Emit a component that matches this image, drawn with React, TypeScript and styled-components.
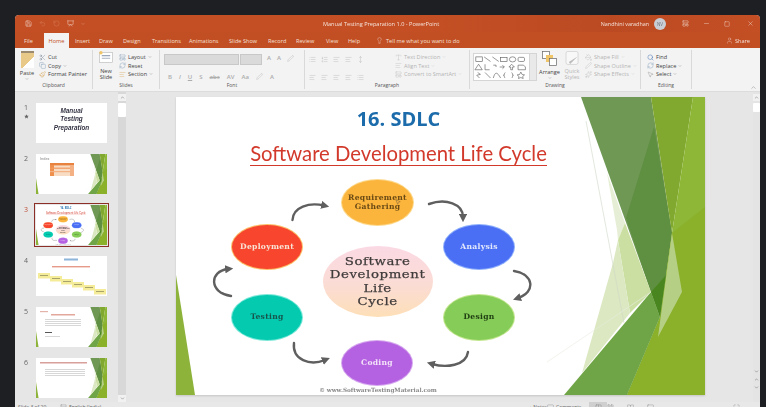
import React from 'react';
import styled, { createGlobalStyle } from 'styled-components';
import {
  Search,
  Lightbulb,
  Save,
  Undo2,
  RotateCcw,
  Presentation,
  Scissors,
  Copy,
  Paintbrush,
  LayoutTemplate,
  RefreshCw,
  Minus,
  X,
  User,
  Square,
  ChevronUp,
  ChevronDown,
  PaintBucket,
  Pen,
  Sparkles,
  MousePointer2,
  Star,
  Type,
  AlignLeft,
  List,
  ListOrdered,
  MoveVertical,
  NotebookText,
  MessageSquare,
  Columns2,
  LayoutGrid,
  BookOpen,
  Monitor,
  Maximize,
} from 'lucide-react';

const SLIDE_W = 529;
const SLIDE_H = 298;
const THUMB_W = 71;

const GlobalStyle = createGlobalStyle`
  html, body {
    margin: 0;
    height: 100%;
    overflow: hidden;
    background: #1d1f23;
  }
`;

const Page = styled.div`
  width: 766px;
  height: 407px;
  box-sizing: border-box;
  padding: 15px 6px 0 15px;
  background: #1d1f23;
  overflow: hidden;
  font-family: 'Open Sans', 'Liberation Sans', sans-serif;
`;

const Window = styled.div`
  height: 401px;
  display: flex;
  flex-direction: column;
  background: #e6e6e6;
  border-radius: 4px 4px 0 0;
  overflow: hidden;
  filter: blur(0.4px);
`;

const TitleBar = styled.div`
  height: 17px;
  flex: none;
  display: flex;
  align-items: center;
  background: linear-gradient(90deg, #c44f25 55%, #bb4a22 80%, #c44f25 100%);
  color: #f5e3da;
  font-size: 5.6px;
`;

const Quick = styled.div`
  width: 155px;
  display: flex;
  align-items: center;
  gap: 7px;
  padding-left: 10px;
  box-sizing: border-box;
`;

const DocName = styled.div`
  width: 290px;
  padding-left: 159px;
  white-space: nowrap;
`;

const TitleRight = styled.div`
  flex: 1;
  display: flex;
  align-items: center;
  justify-content: flex-end;
  gap: 14px;
  padding-right: 6px;
`;

const Account = styled.span`
  white-space: nowrap;
  margin-right: -9px;
  font-size: 5.4px;
`;

const Avatar = styled.span`
  width: 12px;
  height: 12px;
  border-radius: 50%;
  background: #c9ced6;
  color: #6c6f78;
  font-size: 4.5px;
  display: flex;
  align-items: center;
  justify-content: center;
  margin-right: 2px;
`;

const CloseBox = styled.span`
  margin-left: 3px;
  line-height: 0;
`;

const TabBar = styled.div`
  height: 16px;
  flex: none;
  display: flex;
  align-items: flex-end;
  background: #c24e24;
  padding-left: 9px;
  color: #f5e0d6;
  font-size: 5.6px;
`;

const Tab = styled.div<{ $w: number; $active?: boolean }>`
  width: ${({ $w }) => $w}px;
  height: 15px;
  flex: none;
  display: flex;
  align-items: center;
  white-space: nowrap;
  ${({ $active }) =>
    $active &&
    `
    background: #f3f3f3;
    color: #c24e24;
    justify-content: center;
    margin-right: 6px;
  `}
`;

const TellMe = styled.div`
  display: flex;
  align-items: center;
  gap: 3px;
  height: 15px;
  white-space: nowrap;
  font-size: 5.6px;
  margin-left: -1px;
`;

const Share = styled.div`
  margin-left: auto;
  margin-right: 10px;
  height: 15px;
  display: flex;
  align-items: center;
  gap: 2px;
`;

const Ribbon = styled.div`
  height: 44px;
  flex: none;
  display: flex;
  background: #f3f3f3;
  position: relative;
  border-bottom: 1px solid #dcdcdc;
  box-sizing: border-box;
`;

const Group = styled.div<{ $w: number }>`
  width: ${({ $w }) => $w}px;
  flex: none;
  box-sizing: border-box;
  display: flex;
  flex-direction: column;
  margin: 2px 0;
  border-right: 1px solid #d9d9d9;
`;

const GroupBody = styled.div`
  flex: 1;
  display: flex;
  gap: 3px;
  padding: 1px 3px 0;
  min-height: 0;
`;

const GroupLabel = styled.div`
  height: 8px;
  line-height: 8px;
  text-align: center;
  font-size: 5px;
  color: #555;
`;

const BigButton = styled.div<{ $w: number; $off?: boolean }>`
  width: ${({ $w }) => $w}px;
  flex: none;
  display: flex;
  flex-direction: column;
  align-items: center;
  font-size: 5.6px;
  line-height: 6.6px;
  text-align: center;
  white-space: nowrap;
  color: ${({ $off }) => ($off ? '#b4b4b4' : '#444')};
`;

const Spacer = styled.span<{ $h: number }>`
  height: ${({ $h }) => $h}px;
  flex: none;
`;

const PasteIcon = styled.div`
  width: 13px;
  height: 17px;
  margin-bottom: 2px;
  background: linear-gradient(135deg, #e8c988 60%, #fff 60%);
  border-top: 2px solid #9a8a70;
  box-sizing: border-box;
`;

const CmdColumn = styled.div<{ $left?: number }>`
  display: flex;
  flex-direction: column;
  justify-content: space-between;
  padding: 2px 0 3px;
  margin-left: ${({ $left }) => $left ?? 0}px;
`;

const Cmd = styled.div<{ $off?: boolean }>`
  display: flex;
  align-items: center;
  gap: 2px;
  height: 8px;
  white-space: nowrap;
  font-size: 5.6px;
  color: ${({ $off }) => ($off ? '#b4b4b4' : '#444')};
  svg {
    flex: none;
  }
`;

const FontColumn = styled.div`
  display: flex;
  flex-direction: column;
  gap: 7px;
  padding-left: 1px;
`;

const FontTop = styled.div`
  display: flex;
  align-items: center;
  gap: 1px;
`;

const FontBox = styled.div<{ $w: number }>`
  width: ${({ $w }) => $w}px;
  height: 11px;
  margin-top: 3px;
  background: #dadada;
  border: 1px solid #c8c8c8;
  box-sizing: border-box;
`;

const ToolRow = styled.div<{ $gap?: number; $left?: number }>`
  display: flex;
  align-items: center;
  gap: ${({ $gap }) => $gap ?? 7}px;
  margin-left: ${({ $left }) => $left ?? 0}px;
  color: #adadad;
  font-size: 6px;
  font-weight: 600;
  height: 9px;
  white-space: nowrap;
`;

const ParaColumn = styled.div`
  width: 83px;
  flex: none;
  display: flex;
  flex-direction: column;
  gap: 10px;
  padding: 4px 0 0 1px;
`;

const Gallery = styled.div`
  width: 64px;
  height: 28px;
  flex: none;
  margin-top: 2px;
  background: #fff;
  border: 1px solid #d5d5d5;
  box-sizing: border-box;
  display: flex;
`;

const GalleryScroll = styled.div`
  width: 6px;
  margin-left: auto;
  background: #e9e9e9;
  border-left: 1px solid #d5d5d5;
`;

const Collapse = styled.div`
  position: absolute;
  right: 3px;
  bottom: 0;
  color: #999;
  line-height: 0;
`;

const Main = styled.div`
  flex: 1;
  display: flex;
  min-height: 0;
  background: #e6e6e6;
`;

const ThumbPane = styled.div`
  width: 103px;
  flex: none;
  display: flex;
  flex-direction: column;
  gap: 11px;
  padding-top: 11px;
  box-sizing: border-box;
`;

const ThumbRow = styled.div`
  display: flex;
  height: 40px;
  flex: none;
`;

const ThumbMeta = styled.div<{ $active?: boolean }>`
  width: 21px;
  flex: none;
  padding-left: 9px;
  box-sizing: border-box;
  font-size: 7px;
  line-height: 9px;
  color: ${({ $active }) => ($active ? '#c0503a' : '#666')};
`;

const Thumb = styled.div<{ $active?: boolean }>`
  width: ${THUMB_W}px;
  height: 40px;
  flex: none;
  position: relative;
  background: #fff;
  overflow: visible;
  ${({ $active }) =>
    $active &&
    `
    outline: 1.5px solid #8c2f26;
    outline-offset: 1px;
  `}
`;

const ThumbClip = styled.div`
  position: absolute;
  inset: 0;
  overflow: hidden;
`;

const CoverTitle = styled.div`
  position: absolute;
  inset: 4px 0 0 0;
  text-align: center;
  font-family: 'Liberation Sans', sans-serif;
  font-style: italic;
  font-weight: 700;
  font-size: 6.4px;
  line-height: 8.4px;
  color: #333344;
`;

const IndexTitle = styled.div`
  position: absolute;
  left: 4px;
  top: 2px;
  font-size: 3.6px;
  color: #777;
`;

const ScrollTrack = styled.div<{ $w: number; $bg: string }>`
  width: ${({ $w }) => $w}px;
  flex: none;
  display: flex;
  flex-direction: column;
  align-items: center;
  background: ${({ $bg }) => $bg};
  color: #555;
`;

const ScrollBtn = styled.div<{ $bottom?: boolean }>`
  width: 100%;
  height: 7px;
  flex: none;
  display: flex;
  align-items: center;
  justify-content: center;
  background: #f1f1f1;
  margin-top: ${({ $bottom }) => ($bottom ? 'auto' : '2px')};
`;

const ScrollThumb = styled.div<{ $h: number }>`
  width: 100%;
  height: ${({ $h }) => $h}px;
  margin-top: 2px;
  background: #fff;
  border-radius: 1px;
`;

const ScrollNav = styled.div`
  margin-top: auto;
  margin-bottom: 12px;
  display: flex;
  flex-direction: column;
  align-items: center;
  gap: 3px;
`;

const Stage = styled.div`
  flex: 1;
  padding: 5px 0 0 50px;
  min-width: 0;
`;

const SlideFrame = styled.div`
  width: ${SLIDE_W}px;
  height: ${SLIDE_H}px;
  position: relative;
  background: #fff;
  overflow: hidden;
  box-shadow: 0 1px 2px rgba(0, 0, 0, 0.15);
`;

const Backdrop = styled.svg`
  position: absolute;
  inset: 0;
  width: 100%;
  height: 100%;
`;

const Heading = styled.div`
  width: 445px;
  position: relative;
  text-align: center;
`;

const SlideNumber = styled.div`
  padding-top: 8px;
  height: 27px;
  line-height: 27px;
  font-family: 'Open Sans', sans-serif;
  font-weight: 700;
  font-size: 20px;
  color: #1c6cab;
`;

const SlideTitle = styled.div`
  margin-top: 10px;
  display: inline-block;
  font-family: 'Lato', sans-serif;
  font-size: 20.3px;
  line-height: 23px;
  color: #d2392b;
  border-bottom: 1.5px solid #d2392b;
  white-space: nowrap;
`;

const Node = styled.div<{ $x: number; $y: number; $w: number; $h: number; $fill: string; $ring: string; $ink: string }>`
  position: absolute;
  left: ${({ $x }) => $x}px;
  top: ${({ $y }) => $y}px;
  width: ${({ $w }) => $w}px;
  height: ${({ $h }) => $h}px;
  border-radius: 50%;
  box-sizing: border-box;
  display: flex;
  align-items: center;
  justify-content: center;
  text-align: center;
  background: ${({ $fill }) => $fill};
  box-shadow: 0 0 0 1px ${({ $ring }) => $ring};
  color: ${({ $ink }) => $ink};
  font-family: 'DejaVu Serif', 'Liberation Serif', serif;
  font-weight: 700;
  font-size: 7.6px;
  line-height: 8.9px;
  letter-spacing: 0.3px;
`;

const HubNode = styled(Node)`
  background: linear-gradient(180deg, #fbd9e4 0%, #fbdcd4 55%, #fddfb8 100%);
  box-shadow: none;
  font-weight: 400;
  font-size: 11.3px;
  line-height: 13.3px;
  letter-spacing: 0.5px;
  -webkit-text-stroke: 0.25px #3f3b3b;
`;

const HubText = styled.span`
  display: block;
  transform: scaleX(1.18);
`;

const Credit = styled.div`
  position: absolute;
  left: 142px;
  bottom: 1px;
  width: 120px;
  display: flex;
  justify-content: center;
  font-family: 'DejaVu Serif', serif;
  font-weight: 700;
  font-size: 5.7px;
  line-height: 8px;
  color: #8a8a8a;
  white-space: nowrap;
`;

const Cursor = styled.div`
  position: absolute;
  left: 219px;
  top: 102px;
  line-height: 0;
  color: #444;
`;

const ScaledSlide = styled.div`
  position: absolute;
  left: 0;
  top: 0;
  transform-origin: 0 0;
`;

const StatusBar = styled.div`
  height: 14px;
  flex: none;
  display: flex;
  align-items: flex-start;
  padding-left: 3px;
  font-size: 5px;
  color: #666;
  white-space: nowrap;
  background: #e8e8e8;
`;

const StatusItem = styled.div<{ $w: number; $on?: boolean }>`
  width: ${({ $w }) => $w}px;
  flex: none;
  height: 12px;
  padding-top: 2px;
  box-sizing: border-box;
  display: flex;
  gap: 2px;
  background: ${({ $on }) => ($on ? '#cfcfcf' : 'transparent')};
  justify-content: ${({ $on }) => ($on ? 'center' : 'flex-start')};
`;

function Caret() {
  return <ChevronDown size={4} strokeWidth={1.5} />;
}

function Facet() {
  return (
    <Backdrop viewBox={`0 0 ${SLIDE_W} ${SLIDE_H}`} preserveAspectRatio="none">
      <polygon points="0,178 19,298 0,298" fill="#8db33a" />
      <polygon points="405,0 475,0 496,136 484,220 475,195" fill="#6f9855" />
      <polygon points="478,30 496,136 490,178 475,195 450,121" fill="#5f8f40" />
      <polygon points="475,0 517,0 496,136" fill="#82a92f" />
      <polygon points="517,0 529,0 529,298 451,298 484,220 496,136" fill="#8eb738" />
      <polygon points="496,136 529,110 529,298 451,298 484,220" fill="#8bb02a" />
      <polygon points="388,298 475,195 484,220 451,298" fill="#6fa546" />
      <polygon points="431,76 449,126 442,143 441,133" fill="#e6efd6" />
      <polygon points="449,126 475,195 454,216 442,143" fill="#ccdfa3" />
      <polygon points="437,166 442,143 454,216 406,276" fill="#dbe8c1" />
      <polygon points="496,136 506,195 482,240" fill="#b5cf85" />
      <polygon points="475,195 490,178 484,220" fill="#4a861f" />
      <line x1="410" y1="24" x2="448" y2="226" stroke="#cfd6c8" strokeWidth="0.6" />
      <line x1="371" y1="265" x2="475" y2="195" stroke="#e8ecdf" strokeWidth="0.6" />
    </Backdrop>
  );
}

const CycleLinks = styled.svg`
  position: absolute;
  inset: 0;
  width: 100%;
  height: 100%;
`;

function SdlcSlide({ pointer }: { pointer?: boolean }) {
  return (
    <SlideFrame>
      <Facet />
      <Heading>
        <SlideNumber>16. SDLC</SlideNumber>
        <SlideTitle>Software Development Life Cycle</SlideTitle>
      </Heading>
      <CycleLinks viewBox={`0 0 ${SLIDE_W} ${SLIDE_H}`}>
        <defs>
          <marker id="tip" markerWidth="3.4" markerHeight="3.4" refX="1.2" refY="1.7" orient="auto">
            <path d="M0 0 L3.4 1.7 L0 3.4 Z" fill="#5f5f5f" />
          </marker>
        </defs>
        <g fill="none" stroke="#5f5f5f" strokeWidth="2.4" strokeLinecap="round">
          <path d="M116.5 123 C117 110 133 105 148 108.5" markerEnd="url(#tip)" />
          <path d="M253 107 C270 101 287 107 287 120" markerEnd="url(#tip)" />
          <path d="M338 174 C358 177 360 195 342 201" markerEnd="url(#tip)" />
          <path d="M292 255 C290 269 270 271 256 267" markerEnd="url(#tip)" />
          <path d="M118 246 C116 263 134 269 149 263" markerEnd="url(#tip)" />
          <path d="M55 199 C33 196 33 174 52 172" markerEnd="url(#tip)" />
        </g>
      </CycleLinks>
      <Node $x={166} $y={83} $w={71} $h={45} $fill="#fbb53c" $ring="#fdd98d" $ink="#6b4a14">
        Requirement
        <br />
        Gathering
      </Node>
      <Node $x={56} $y={128} $w={70} $h={44} $fill="#f7462d" $ring="#fcc06a" $ink="#f9e3d6">
        Deployment
      </Node>
      <Node $x={268} $y={128} $w={70} $h={44} $fill="#4a6ff5" $ring="#8fb0fb" $ink="#e3e8fb">
        Analysis
      </Node>
      <HubNode $x={147} $y={149} $w={110} $h={71} $fill="" $ring="" $ink="#3f3b3b">
        <HubText>
          Software
          <br />
          Development
          <br />
          Life
          <br />
          Cycle
        </HubText>
      </HubNode>
      <Node $x={56} $y={198} $w={70} $h={45} $fill="#04cbb0" $ring="#7ce8d8" $ink="#17544c">
        Testing
      </Node>
      <Node $x={268} $y={198} $w={70} $h={45} $fill="#86cc58" $ring="#c3e68f" $ink="#1f3d12">
        Design
      </Node>
      <Node $x={166} $y={244} $w={70} $h={44} $fill="#b562e2" $ring="#d6a9ee" $ink="#f3e2f8">
        Coding
      </Node>
      <Credit>© www.SoftwareTestingMaterial.com</Credit>
      {pointer && (
        <Cursor>
          <MousePointer2 size={6} strokeWidth={1.4} />
        </Cursor>
      )}
    </SlideFrame>
  );
}

function IndexTable() {
  return (
    <Backdrop viewBox="0 0 71 40">
      <rect x="14" y="9" width="24" height="13" fill="#f8dcc4" />
      <rect x="14" y="9" width="24" height="2.4" fill="#e8823f" />
      <rect x="14" y="11" width="4" height="11" fill="#ef8f4c" />
      <rect x="14" y="13.6" width="24" height="1.2" fill="#f09a5c" />
      <rect x="14" y="17" width="24" height="1.2" fill="#f4b183" />
      <rect x="34" y="11" width="4" height="11" fill="#f4b183" />
    </Backdrop>
  );
}

function StairThumb() {
  const steps = [
    [2, 17],
    [14, 20],
    [25, 23],
    [36, 26],
    [47, 29],
    [58, 33],
  ];
  return (
    <Backdrop viewBox="0 0 71 40">
      <rect x="28" y="2.5" width="14" height="2" fill="#8db4da" />
      <rect x="16" y="10" width="38" height="1.4" fill="#e59a8a" />
      {steps.map(([x, y]) => (
        <g key={x}>
          <rect x={x} y={y} width="12" height="5.5" fill="#f5ec9a" />
          <rect x={x + 2} y={y + 2} width="8" height="1" fill="#a8a26c" />
        </g>
      ))}
    </Backdrop>
  );
}

function NotesThumb({ red }: { red?: boolean }) {
  return (
    <Backdrop viewBox="0 0 71 40">
      {red ? (
        <rect x="4" y="4" width="47" height="1.5" fill="#d8a09a" />
      ) : (
        <>
          <rect x="4" y="4" width="8" height="1.2" fill="#e3b3aa" />
          <rect x="15" y="7" width="24" height="1.5" fill="#e3a79c" />
        </>
      )}
      {[11, 13, 15, 17].map(y => (
        <rect key={y} x="9" y={y + (red ? 0 : 1)} width={red ? 40 : 36} height="0.8" fill="#cdcdcd" />
      ))}
      {!red && <rect x="9" y="25" width="7" height="1" fill="#555" />}
      {!red && <rect x="9" y="29" width="15" height="0.8" fill="#cdcdcd" />}
    </Backdrop>
  );
}

function ShapeGallery() {
  return (
    <svg width="56" height="26" viewBox="0 0 60 26" fill="none" stroke="#5f5f5f" strokeWidth="0.7">
      <rect x="2" y="2" width="7" height="5" />
      <path d="M11 2 L18 7 M20 2 L27 7" />
      <rect x="29" y="2.5" width="7" height="4.5" />
      <ellipse cx="42" cy="4.7" rx="3.5" ry="2.8" />
      <rect x="48" y="2.5" width="7" height="4.5" rx="1.4" />
      <path d="M5 10 L9 16 H1 Z M12 10 V16 H17 M21 11 H24 V13 M28 13 H33 M31 11 L33 13 L31 15 M41 10 L44 13 H42 V16 H40 V13 H38 Z" />
      <path d="M48 16 V11 H54 L56 13 V16 Z" />
      <path d="M4 19 L7 21 L3 22 L6 25 M12 19 L18 25 M21 25 C23 18 25 18 29 25 M34 19 C32 21 34 22 32 22 C34 22 32 24 34 25 M41 19 C43 21 41 22 43 22 C41 22 43 24 41 25" />
      <path d="M51 18.5 L52.4 21.2 L55 21.6 L53 23.4 L53.6 25.5 L51 24.5 L48.4 25.5 L49 23.4 L47 21.6 L49.6 21.2 Z" />
    </svg>
  );
}

function ArrangeIcon() {
  return (
    <svg width="15" height="15" viewBox="0 0 15 15">
      <rect x="0.5" y="0.5" width="7" height="7" fill="#fff" stroke="#666" strokeWidth="0.7" />
      <rect x="4" y="4" width="7" height="7" fill="#f0c468" />
      <rect x="7.5" y="7.5" width="7" height="7" fill="#fff" stroke="#666" strokeWidth="0.7" />
    </svg>
  );
}

function QuickStylesIcon() {
  return (
    <svg width="15" height="16" viewBox="0 0 15 16">
      <rect x="0.5" y="0.5" width="13" height="14" rx="2" fill="#f8f8f8" stroke="#c8c8c8" strokeWidth="0.7" />
      <path d="M13 6 L5 14 L3.5 12 Z" fill="#bcbcbc" />
    </svg>
  );
}

function NewSlideIcon() {
  return (
    <svg width="16" height="14" viewBox="0 0 16 14">
      <rect x="0.5" y="2" width="15" height="11.5" fill="#fff" stroke="#b5b5b5" strokeWidth="0.7" />
      <rect x="3" y="5" width="10" height="1.2" fill="#7f8fa8" />
      <rect x="3" y="8" width="10" height="1.2" fill="#a9b3c4" />
      <circle cx="2" cy="2" r="2" fill="#f0c468" />
    </svg>
  );
}

const tabs: [string, number][] = [
  ['Insert', 24],
  ['Draw', 24],
  ['Design', 29],
  ['Transitions', 37],
  ['Animations', 40],
  ['Slide Show', 39],
  ['Record', 28],
  ['Review', 30],
  ['View', 22],
  ['Help', 29],
];

const off = { size: 7, strokeWidth: 1.2 };

export default function App() {
  return (
    <>
      <GlobalStyle />
      <Page>
        <Window>
          <TitleBar>
            <Quick>
              <Save size={7} strokeWidth={1.6} />
              <Undo2 size={7} strokeWidth={1.3} color="#dc8a66" />
              <RotateCcw size={7} strokeWidth={1.3} color="#dc8a66" />
              <Presentation size={7} strokeWidth={1.5} />
              <Caret />
            </Quick>
            <DocName>Manual Testing Preparation 1.0 - PowerPoint</DocName>
            <TitleRight>
              <Account>Nandhini varadhan</Account>
              <Avatar>NV</Avatar>
              <LayoutTemplate size={7} strokeWidth={1.6} />
              <Minus size={7} strokeWidth={1.4} />
              <Square size={6} strokeWidth={1.6} />
              <CloseBox>
                <X size={7} strokeWidth={1.4} />
              </CloseBox>
            </TitleRight>
          </TitleBar>
          <TabBar>
            <Tab $w={20}>File</Tab>
            <Tab $w={25} $active>
              Home
            </Tab>
            {tabs.map(([name, w]) => (
              <Tab key={name} $w={w}>
                {name}
              </Tab>
            ))}
            <TellMe>
              <Lightbulb size={7} strokeWidth={1.3} />
              Tell me what you want to do
            </TellMe>
            <Share>
              <User size={7} strokeWidth={1.2} />
              Share
            </Share>
          </TabBar>
          <Ribbon>
            <Group $w={78}>
              <GroupBody>
                <BigButton $w={18}>
                  <PasteIcon />
                  Paste
                  <Caret />
                </BigButton>
                <CmdColumn>
                  <Cmd>
                    <Scissors size={7} strokeWidth={1.1} color="#5d6d88" />
                    Cut
                  </Cmd>
                  <Cmd>
                    <Copy size={7} strokeWidth={1.1} color="#5d80a8" />
                    Copy <Caret />
                  </Cmd>
                  <Cmd>
                    <Paintbrush size={7} strokeWidth={1.3} color="#d49a3c" />
                    Format Painter
                  </Cmd>
                </CmdColumn>
              </GroupBody>
              <GroupLabel>Clipboard</GroupLabel>
            </Group>
            <Group $w={67}>
              <GroupBody>
                <BigButton $w={20}>
                  <NewSlideIcon />
                  <Spacer $h={5} />
                  New
                  <br />
                  Slide
                </BigButton>
                <CmdColumn>
                  <Cmd>
                    <LayoutTemplate size={7} strokeWidth={1.1} color="#5d80a8" />
                    Layout <Caret />
                  </Cmd>
                  <Cmd>
                    <RefreshCw size={7} strokeWidth={1.1} color="#5d80a8" />
                    Reset
                  </Cmd>
                  <Cmd>
                    <AlignLeft size={7} strokeWidth={1.1} color="#d49a3c" />
                    Section <Caret />
                  </Cmd>
                </CmdColumn>
              </GroupBody>
              <GroupLabel>Slides</GroupLabel>
            </Group>
            <Group $w={145}>
              <GroupBody>
                <FontColumn>
                  <FontTop>
                    <FontBox $w={75} />
                    <FontBox $w={22} />
                    <ToolRow $gap={6} $left={4}>
                      <span>A</span>
                      <span>A</span>
                      <Pen {...off} />
                    </ToolRow>
                  </FontTop>
                  <ToolRow $gap={7} $left={4}>
                    <span>B</span>
                    <i>I</i>
                    <u>U</u>
                    <span>S</span>
                    <s>abc</s>
                    <span>AV</span>
                    <span>Aa</span>
                    <Pen {...off} />
                    <span>A</span>
                  </ToolRow>
                </FontColumn>
              </GroupBody>
              <GroupLabel>Font</GroupLabel>
            </Group>
            <Group $w={165}>
              <GroupBody>
                <ParaColumn>
                  <ToolRow $gap={5}>
                    <List {...off} />
                    <ListOrdered {...off} />
                    <AlignLeft {...off} />
                    <AlignLeft {...off} />
                    <MoveVertical {...off} />
                  </ToolRow>
                  <ToolRow $gap={5}>
                    <AlignLeft {...off} />
                    <AlignLeft {...off} />
                    <AlignLeft {...off} />
                    <AlignLeft {...off} />
                    <List {...off} />
                  </ToolRow>
                </ParaColumn>
                <CmdColumn>
                  <Cmd $off>
                    <Type size={7} strokeWidth={1.1} />
                    Text Direction <Caret />
                  </Cmd>
                  <Cmd $off>
                    <AlignLeft size={7} strokeWidth={1.1} />
                    Align Text <Caret />
                  </Cmd>
                  <Cmd $off>
                    <LayoutTemplate size={7} strokeWidth={1.1} />
                    Convert to SmartArt <Caret />
                  </Cmd>
                </CmdColumn>
              </GroupBody>
              <GroupLabel>Paragraph</GroupLabel>
            </Group>
            <Group $w={171}>
              <GroupBody>
                <Gallery>
                  <ShapeGallery />
                  <GalleryScroll />
                </Gallery>
                <BigButton $w={19}>
                  <ArrangeIcon />
                  <Spacer $h={3} />
                  Arrange
                  <Caret />
                </BigButton>
                <BigButton $w={20} $off>
                  <QuickStylesIcon />
                  <Spacer $h={2} />
                  Quick
                  <br />
                  Styles
                </BigButton>
                <CmdColumn>
                  <Cmd $off>
                    <PaintBucket size={7} strokeWidth={1.1} />
                    Shape Fill <Caret />
                  </Cmd>
                  <Cmd $off>
                    <Pen size={7} strokeWidth={1.1} />
                    Shape Outline <Caret />
                  </Cmd>
                  <Cmd $off>
                    <Sparkles size={7} strokeWidth={1.1} />
                    Shape Effects <Caret />
                  </Cmd>
                </CmdColumn>
              </GroupBody>
              <GroupLabel>Drawing</GroupLabel>
            </Group>
            <Group $w={51}>
              <GroupBody>
                <CmdColumn $left={3}>
                  <Cmd>
                    <Search size={7} strokeWidth={1.4} color="#2b5fa8" />
                    Find
                  </Cmd>
                  <Cmd>
                    <RefreshCw size={7} strokeWidth={1.1} color="#5d80a8" />
                    Replace <Caret />
                  </Cmd>
                  <Cmd>
                    <MousePointer2 size={7} strokeWidth={1.1} color="#777" />
                    Select <Caret />
                  </Cmd>
                </CmdColumn>
              </GroupBody>
              <GroupLabel>Editing</GroupLabel>
            </Group>
            <Collapse>
              <ChevronUp size={7} />
            </Collapse>
          </Ribbon>
          <Main>
            <ThumbPane>
              <ThumbRow>
                <ThumbMeta>
                  1
                  <br />
                  <Star size={5} fill="#666" strokeWidth={0} />
                </ThumbMeta>
                <Thumb>
                  <CoverTitle>
                    Manual
                    <br />
                    Testing
                    <br />
                    Preparation
                  </CoverTitle>
                </Thumb>
              </ThumbRow>
              <ThumbRow>
                <ThumbMeta>2</ThumbMeta>
                <Thumb>
                  <ThumbClip>
                    <Facet />
                    <IndexTitle>Index</IndexTitle>
                    <IndexTable />
                  </ThumbClip>
                </Thumb>
              </ThumbRow>
              <ThumbRow>
                <ThumbMeta $active>3</ThumbMeta>
                <Thumb $active>
                  <ThumbClip>
                    <ScaledSlide style={{ transform: `scale(${THUMB_W / SLIDE_W})` }}>
                      <SdlcSlide />
                    </ScaledSlide>
                  </ThumbClip>
                </Thumb>
              </ThumbRow>
              <ThumbRow>
                <ThumbMeta>4</ThumbMeta>
                <Thumb>
                  <StairThumb />
                </Thumb>
              </ThumbRow>
              <ThumbRow>
                <ThumbMeta>5</ThumbMeta>
                <Thumb>
                  <ThumbClip>
                    <Facet />
                    <NotesThumb />
                  </ThumbClip>
                </Thumb>
              </ThumbRow>
              <ThumbRow>
                <ThumbMeta>6</ThumbMeta>
                <Thumb>
                  <ThumbClip>
                    <Facet />
                    <NotesThumb red />
                  </ThumbClip>
                </Thumb>
              </ThumbRow>
            </ThumbPane>
            <ScrollTrack $w={8} $bg="#d8d8d8">
              <ScrollBtn>
                <ChevronUp size={5} />
              </ScrollBtn>
              <ScrollThumb $h={14} />
              <ScrollBtn $bottom>
                <ChevronDown size={5} />
              </ScrollBtn>
            </ScrollTrack>
            <Stage>
              <SdlcSlide pointer />
            </Stage>
            <ScrollTrack $w={7} $bg="#e4e4e4">
              <ScrollBtn>
                <ChevronUp size={5} />
              </ScrollBtn>
              <ScrollThumb $h={9} />
              <ScrollNav>
                <ChevronDown size={5} />
                <ChevronUp size={5} />
                <ChevronDown size={5} />
              </ScrollNav>
            </ScrollTrack>
          </Main>
          <StatusBar>
            <StatusItem $w={42}>Slide 3 of 20</StatusItem>
            <StatusItem $w={470}>
              <LayoutTemplate size={7} strokeWidth={1} />
              English (India)
            </StatusItem>
            <StatusItem $w={17}>
              <NotebookText size={7} strokeWidth={1} />
              Notes
            </StatusItem>
            <StatusItem $w={42}>
              <MessageSquare size={7} strokeWidth={1} />
              Comments
            </StatusItem>
            <StatusItem $w={18} $on>
              <Columns2 size={7} strokeWidth={1} />
            </StatusItem>
            <StatusItem $w={20}>
              <LayoutGrid size={7} strokeWidth={1} />
            </StatusItem>
            <StatusItem $w={20}>
              <BookOpen size={7} strokeWidth={1} />
            </StatusItem>
            <StatusItem $w={86}>
              <Monitor size={7} strokeWidth={1} />
            </StatusItem>
            <StatusItem $w={10}>
              <Maximize size={7} strokeWidth={1} />
            </StatusItem>
          </StatusBar>
        </Window>
      </Page>
    </>
  );
}
